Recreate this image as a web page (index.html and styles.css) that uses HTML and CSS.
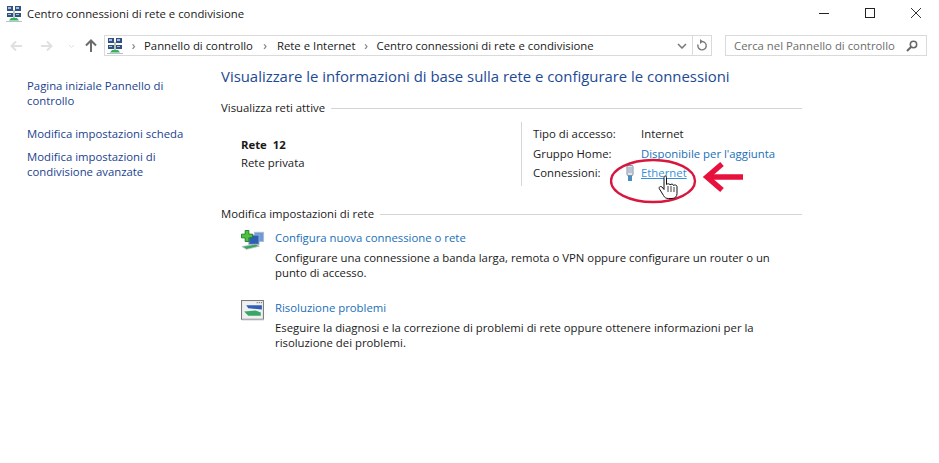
FILE: index.html
```html
<!DOCTYPE html>
<html lang="it">
<head>
<meta charset="utf-8">
<title>Centro connessioni di rete e condivisione</title>
<link rel="stylesheet" href="styles.css">
</head>
<body>
<svg class="defs" width="0" height="0"><defs>
<symbol id="net" viewBox="0 0 16 16">
<rect x="1" y="0" width="6" height="5" fill="#33507f"/><rect x="9" y="0" width="6" height="5" fill="#33507f"/>
<rect x="2" y="1" width="3" height="2" fill="#9fc0e8"/><rect x="10" y="1" width="3" height="2" fill="#9fc0e8"/>
<rect x="1" y="7" width="6" height="4" fill="#33507f"/><rect x="9" y="7" width="6" height="4" fill="#33507f"/>
<rect x="2" y="8" width="3" height="1" fill="#9fc0e8"/><rect x="10" y="8" width="3" height="1" fill="#9fc0e8"/>
<rect x="7.500" y="4" width="1" height="9" fill="#6d8a7c"/>
<path d="M5 12h6l2 2.500H3z" fill="#2fb35f"/><rect x="0" y="15" width="16" height="1" fill="#b5c0c8"/>
</symbol>
</defs></svg>

<header class="titlebar">
  <svg class="ico16"><use href="#net"/></svg>
  <span class="title">Centro connessioni di rete e condivisione</span>
  <div class="winbtns">
    <svg class="winbtn" width="46" height="14" viewBox="0 0 46 14"><path d="M18 6.500h10" stroke="#222" fill="none"/></svg>
    <svg class="winbtn" width="46" height="14" viewBox="0 0 46 14"><rect x="18.500" y="1.500" width="9" height="9" stroke="#222" fill="none"/></svg>
    <svg class="winbtn" width="46" height="14" viewBox="0 0 46 14"><path d="M18 1l10 10M28 1L18 11" stroke="#333" stroke-width="1" fill="none"/></svg>
  </div>
</header>

<nav class="navbar">
  <div class="navbtns">
    <svg width="80" height="16" viewBox="0 0 80 16">
      <path d="M22 8H12M16 3.500L11.500 8l4.500 4.500" stroke="#e0e0e0" stroke-width="2" fill="none"/>
      <path d="M41 8h10M47 3.500L51.500 8 47 12.500" stroke="#e0e0e0" stroke-width="2" fill="none"/>
      <path d="M69 7l2.500 2.500L74 7" stroke="#e0e0e0" stroke-width="1" fill="none"/>
    </svg>
    <svg class="uparrow" width="12" height="13" viewBox="0 0 12 13"><path d="M6 13V2M1 6.500L6 1.500l5 5" stroke="#6b6b6b" stroke-width="2" fill="none"/></svg>
  </div>
  <div class="address">
    <svg class="ico16"><use href="#net"/></svg>
    <span class="chev first-chev">›</span><span>Pannello di controllo</span>
    <span class="chev">›</span><span>Rete e Internet</span>
    <span class="chev last-chev">›</span><span>Centro connessioni di rete e condivisione</span>
    <span class="addr-end">
      <svg class="drop" width="10" height="6" viewBox="0 0 10 6"><path d="M1 1l4 4 4-4" stroke="#777" stroke-width="1.500" fill="none"/></svg>
      <span class="refresh"><svg width="12" height="13" viewBox="0 0 12 13"><path d="M6 2.500a4.200 4.200 0 1 1-4 3" stroke="#777" stroke-width="1.400" fill="none"/><path d="M4 0v5l3-2.500z" fill="#777"/></svg></span>
    </span>
  </div>
  <div class="search">
    <span>Cerca nel Pannello di controllo</span>
    <svg width="12" height="12" viewBox="0 0 12 12"><circle cx="7.500" cy="4.500" r="3.200" stroke="#666" stroke-width="1.500" fill="none"/><path d="M5 7l-4 4" stroke="#666" stroke-width="2"/></svg>
  </div>
</nav>

<div class="layout">
  <aside class="side">
    <a class="side-link first">Pagina iniziale Pannello di controllo</a>
    <a class="side-link">Modifica impostazioni scheda</a>
    <a class="side-link">Modifica impostazioni di condivisione avanzate</a>
  </aside>
  <main class="content">
    <h1 class="heading">Visualizzare le informazioni di base sulla rete e configurare le connessioni</h1>
    <div class="section-head"><span>Visualizza reti attive</span><i></i></div>
    <section class="active">
      <div class="netname">
        <div class="netbold">Rete&nbsp; 12</div>
        <div>Rete privata</div>
      </div>
      <dl class="props">
        <dt>Tipo di accesso:</dt><dd>Internet</dd>
        <dt>Gruppo Home:</dt><dd><a class="link">Disponibile per l'aggiunta</a></dd>
        <dt>Connessioni:</dt>
        <dd class="conn">
          <svg class="plug" width="10" height="17" viewBox="0 0 10 17"><rect x="2" y="0.500" width="6" height="10" rx="1" fill="#dfe5ea" stroke="#7f92a6"/><path d="M4 2v6M6 2v6" stroke="#8ea3b8"/><rect x="3" y="11" width="4" height="5" fill="#4a8cc2"/></svg>
          <a class="link under">Ethernet</a>
        </dd>
      </dl>
    </section>
    <div class="section-head second"><span>Modifica impostazioni di rete</span><i></i></div>
    <section class="task first-task">
      <svg class="task-ico" width="26" height="22" viewBox="0 0 26 22">
        <rect x="14.500" y="2.500" width="10" height="10" fill="#6f9ad8" stroke="#a9bcd4"/><rect x="8.500" y="5.500" width="11" height="10" fill="#2f5fb5" stroke="#9ab0cc"/>
        <path d="M1 18l15-2.500 4 2L6 21z" fill="#3aa565" stroke="#b5bfba" stroke-width=".8"/>
        <path d="M4.500 .5h4v4h4v4h-4v4h-4v-4h-4v-4h4z" fill="#4ec23e" stroke="#1e7a24"/>
      </svg>
      <div class="task-body">
        <a class="link big">Configura nuova connessione o rete</a>
        <p>Configurare una connessione a banda larga, remota o VPN oppure configurare un router o un punto di accesso.</p>
      </div>
    </section>
    <section class="task">
      <svg class="task-ico" width="23" height="20" viewBox="0 0 23 20">
        <rect x="0.500" y="0.500" width="21" height="18" fill="#eef0f2" stroke="#7a7a7a"/>
        <path d="M1 18.500h21v1H1z" fill="#bdbdbd"/>
        <path d="M15 2.500h1M17 2.500h1M19 2.500h1" stroke="#777"/>
        <path d="M5 5h15v4l-13-1z" fill="#2f5fb5"/>
        <path d="M3 11l11-1 5 2v3H7z" fill="#3aa565"/>
      </svg>
      <div class="task-body">
        <a class="link big">Risoluzione problemi</a>
        <p>Eseguire la diagnosi e la correzione di problemi di rete oppure ottenere informazioni per la risoluzione dei problemi.</p>
      </div>
    </section>
  </main>
</div>

<svg class="annot" width="140" height="52" viewBox="0 0 140 52">
  <ellipse cx="43" cy="26" rx="42" ry="21" fill="none" stroke="#d8173f" stroke-width="2.400"/>
  <path d="M133 22H100" fill="none" stroke="#e8103c" stroke-width="5.500"/>
  <path d="M112 9L97 22l15 13" fill="none" stroke="#e8103c" stroke-width="5.500"/>
  <path d="M54 22.500v12l-2-2.500c-2-1.500-3.500.5-2.500 2l4 6.500c1 2 2.500 3 5 3h3.500c3 0 5-2 5-5v-7c0-1.500-2.500-2-3.500-1 0-1.500-2.500-2-3.500-.5 0-1.500-2.500-1.500-3.500-.5v-7c0-2-2.500-2-2.500 0z" fill="#fff" stroke="#111" stroke-width="1"/>
  <path d="M58 31v6M61 31v6M64 32v5" stroke="#111" stroke-width=".8"/>
</svg>
</body>
</html>
```

FILE: styles.css
```css
* { box-sizing: border-box; }
html, body { margin: 0; height: 100%; background: #fff; overflow: hidden; }
body {
  position: relative;
  font-family: "Open Sans", "Noto Sans", sans-serif;
  font-size: 11.350px;
  color: #1a1a1a;
}
.defs { position: absolute; }
.ico16 { width: 16px; height: 16px; flex: none; }

.titlebar { display: flex; align-items: center; height: 27px; padding-left: 6px; gap: 5px; }
.winbtns { margin-left: auto; display: flex; }
.winbtn { display: block; }

.navbar { display: flex; align-items: center; height: 21px; margin-top: 8px; }
.navbtns { display: flex; align-items: center; width: 104px; flex: none; }
.uparrow { margin-left: 5px; }
.address {
  display: flex; align-items: center; width: 608px; height: 21px; flex: none;
  border: 1px solid #dadada; padding-left: 2px;
}
.chev { flex: none; width: 24px; text-align: center; color: #666; font-size: 12px; }
.first-chev { width: 21px; }
.last-chev { width: 21px; }
.addr-end { margin-left: auto; display: flex; align-items: center; height: 100%; }
.drop { margin-right: 5px; }
.refresh { display: flex; align-items: center; justify-content: center; width: 19px; height: 100%; border-left: 1px solid #dadada; }
.search {
  display: flex; align-items: center; justify-content: space-between;
  width: 202px; height: 21px; margin-left: 13px; padding: 0 8px;
  border: 1px solid #dadada; color: #6d6d6d;
}

.layout { display: flex; }
.side { width: 221px; flex: none; padding: 22px 20px 0 27px; display: flex; flex-direction: column; gap: 8px; }
.side-link { display: block; line-height: 15px; color: #1b3f8f; }
.side-link.first { margin-bottom: 10px; }
.content { width: 581px; flex: none; padding-top: 9px; }
.heading { margin: 0; font-size: 14.900px; font-weight: 400; line-height: 22px; color: #1c4a94; white-space: nowrap; }
.section-head { display: flex; align-items: center; gap: 6px; margin-top: 13px; line-height: 16px; }
.section-head i { flex: 1; height: 1px; background: #d5d5d5; }
.section-head.second { margin-top: 20px; }

.active { display: flex; height: 64px; margin-top: 6px; }
.netname { width: 300px; padding: 14px 0 0 20px; line-height: 18px; }
.netbold { font-weight: 700; }
.props {
  margin: 0; display: grid; grid-template-columns: 108px auto; grid-auto-rows: 19.500px;
  border-left: 1px solid #d5d5d5; padding: 2px 0 0 11px; height: 64px; align-content: start; line-height: 19.500px;
}
.props dt, .props dd { margin: 0; }
.conn { position: relative; }
.plug { position: absolute; left: -16px; top: 2px; }
.link { color: #1a6fb8; }
.under { color: #3a8fd8; text-decoration: underline; }

.task { display: flex; margin-top: 19px; }
.first-task { margin-top: 7px; }
.task-ico { flex: none; margin: 1px 10px 0 20px; width: 24px; height: auto; align-self: flex-start; }
.task-body { width: 510px; }
.task-body .big { display: block; line-height: 18px; }
.task-body p { margin: 3px 0 0; line-height: 15px; }

.annot { position: absolute; left: 610px; top: 155px; }
```
